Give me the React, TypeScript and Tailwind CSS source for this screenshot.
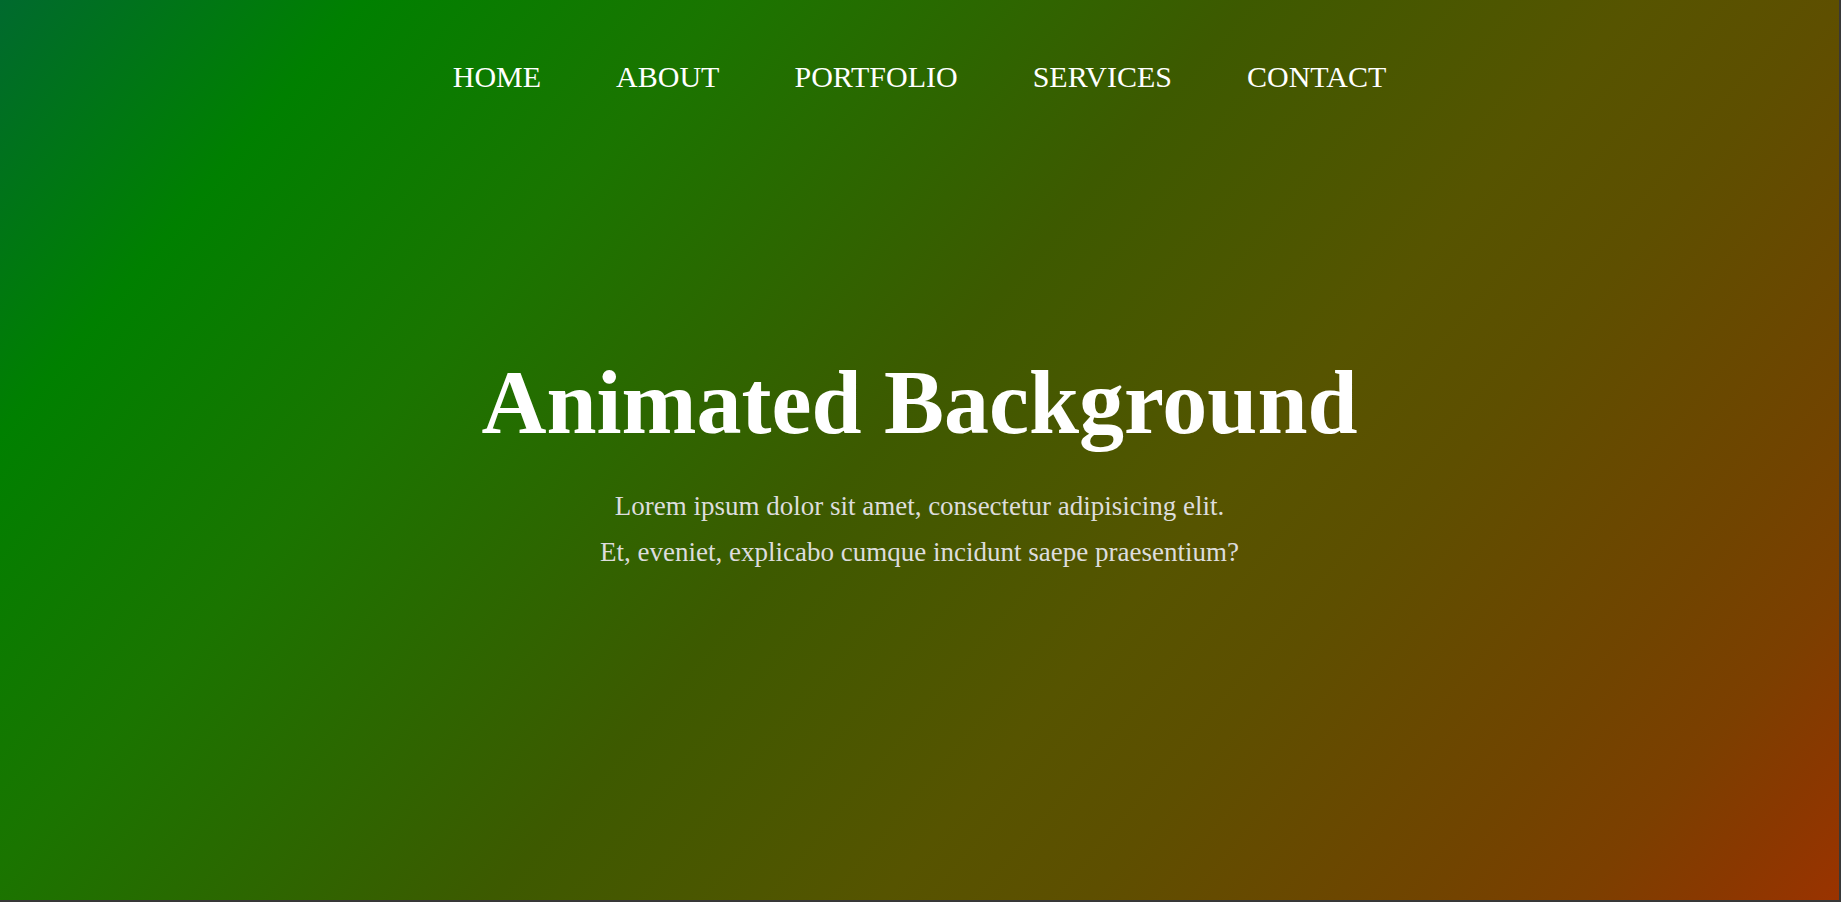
const links = ["HOME", "ABOUT", "PORTFOLIO", "SERVICES", "CONTACT"];

export default function App() {
  return (
    <div className="w-full h-[902px] bg-[#383838] overflow-hidden">
      <section
        className="w-[1839px] h-[900px] flex flex-col items-center bg-[linear-gradient(130deg,#006a2e_0%,#008000_14%,#1a7500_28%,#3d5a00_48%,#565400_63%,#5e4f00_71%,#714400_84%,#7c3f00_90%,#8a3800_95%,#9a3300_100%)]"
        style={{ fontFamily: '"Liberation Serif", "Times New Roman", serif' }}
      >
        {/* nav */}
        <nav className="pt-[62px]">
          <ul className="flex items-center gap-[75px]">
            {links.map((l) => (
              <li key={l}>
                <a href="#" className="text-white text-[30px] leading-none">
                  {l}
                </a>
              </li>
            ))}
          </ul>
        </nav>

        {/* hero */}
        <div className="mt-[264px] flex flex-col items-center text-center">
          <h1 className="text-white text-[90px] font-bold leading-none">
            Animated Background
          </h1>
          <p className="mt-[35px] text-[#dddddd] text-[27px] leading-[46px]">
            Lorem ipsum dolor sit amet, consectetur adipisicing elit.
            <br />
            Et, eveniet, explicabo cumque incidunt saepe praesentium?
          </p>
        </div>
      </section>
    </div>
  );
}
